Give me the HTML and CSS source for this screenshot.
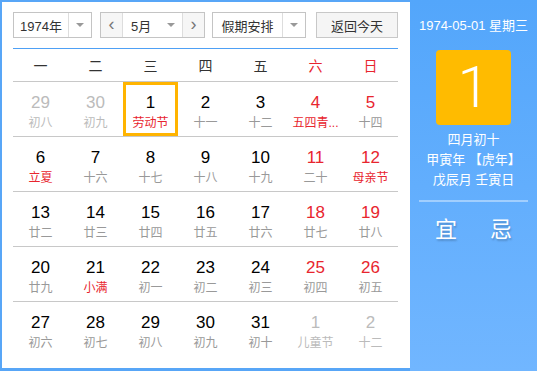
FILE: index.html
```html
<!DOCTYPE html>
<html lang="zh-CN">
<head>
    <meta charset="UTF-8">
    <title>万年历</title>
    <link rel="stylesheet" href="styles.css">
</head>
<body>
    <div class="calendar">
        <div class="main">
            <div class="toolbar">
                <div class="select year">
                    <span class="select-text">1974年</span>
                    <span class="select-arrow"><i></i></span>
                </div>
                <div class="month-group">
                    <span class="nav">&lsaquo;</span>
                    <span class="select-text month">5月</span>
                    <span class="month-arrow"><i></i></span>
                    <span class="nav">&rsaquo;</span>
                </div>
                <div class="select holiday">
                    <span class="select-text">假期安排</span>
                    <span class="select-arrow"><i></i></span>
                </div>
                <button class="today-btn">返回今天</button>
            </div>

            <div class="weekdays">
                <span>一</span><span>二</span><span>三</span><span>四</span><span>五</span>
                <span class="weekend">六</span><span class="weekend">日</span>
            </div>

            <div class="days" id="days"></div>
        </div>

        <div class="side">
            <div class="side-date">1974-05-01 星期三</div>
            <div class="big-day">1</div>
            <div class="lunar-info">
                <p>四月初十</p>
                <p>甲寅年 【虎年】</p>
                <p>戊辰月 壬寅日</p>
            </div>
            <div class="side-line"></div>
            <div class="yiji">
                <span>宜</span>
                <span>忌</span>
            </div>
        </div>
    </div>

    <script>
        // day, lunar text, type: o = other month, w = weekend, f = festival
        const days = [
            ['29', '初八', 'o'], ['30', '初九', 'o'], ['1', '劳动节', 'f sel'], ['2', '十一', ''],
            ['3', '十二', ''], ['4', '五四青...', 'w f'], ['5', '十四', 'w'],
            ['6', '立夏', 'f'], ['7', '十六', ''], ['8', '十七', ''], ['9', '十八', ''],
            ['10', '十九', ''], ['11', '二十', 'w'], ['12', '母亲节', 'w f'],
            ['13', '廿二', ''], ['14', '廿三', ''], ['15', '廿四', ''], ['16', '廿五', ''],
            ['17', '廿六', ''], ['18', '廿七', 'w'], ['19', '廿八', 'w'],
            ['20', '廿九', ''], ['21', '小满', 'f'], ['22', '初一', ''], ['23', '初二', ''],
            ['24', '初三', ''], ['25', '初四', 'w'], ['26', '初五', 'w'],
            ['27', '初六', ''], ['28', '初七', ''], ['29', '初八', ''], ['30', '初九', ''],
            ['31', '初十', ''], ['1', '儿童节', 'o'], ['2', '十二', 'o']
        ];

        const box = document.getElementById('days');
        days.forEach(function(d) {
            const cell = document.createElement('div');
            const flags = d[2].split(' ');
            cell.className = 'day';
            if (flags.includes('o')) cell.classList.add('other');
            if (flags.includes('w')) cell.classList.add('weekend');
            if (flags.includes('f')) cell.classList.add('festival');
            if (flags.includes('sel')) cell.classList.add('selected');
            cell.innerHTML = '<div class="num">' + d[0] + '</div><div class="lunar">' + d[1] + '</div>';
            box.appendChild(cell);
        });
    </script>
</body>
</html>
```

FILE: styles.css
```css
* {
    box-sizing: border-box;
}
body {
    margin: 0;
    font-family: "Liberation Sans", "Noto Sans CJK SC", sans-serif;
    background: #fff;
}
.calendar {
    display: flex;
    width: 537px;
    height: 371px;
    background: #58a6f7;
}
.main {
    width: 408px;
    height: 366px;
    margin: 2px 0 0 2px;
    padding: 10px 12px 0 11px;
    background: #fff;
}
.toolbar {
    display: flex;
    height: 26px;
    font-size: 13px;
    color: #333;
}
.select,
.month-group {
    display: flex;
    border: 1px solid #c4c4c4;
    background: #fff;
}
.year {
    width: 79px;
    margin-right: 8px;
}
.year .select-text {
    width: 55px;
}
.holiday {
    width: 94px;
    margin-right: 10px;
}
.holiday .select-text {
    width: 70px;
}
.select-text {
    display: flex;
    align-items: center;
    justify-content: center;
    border-right: 1px solid #ddd;
}
.select-arrow {
    flex: 1;
    display: flex;
    align-items: center;
    justify-content: center;
}
.select-arrow i,
.month-arrow i {
    width: 0;
    height: 0;
    border-left: 4px solid transparent;
    border-right: 4px solid transparent;
    border-top: 4px solid #999;
}
.month-group {
    width: 105px;
    margin-right: 7px;
}
.nav {
    width: 22px;
    display: flex;
    align-items: center;
    justify-content: center;
    background: #f6f6f6;
    color: #777;
    font-size: 18px;
    line-height: 1;
    padding-bottom: 2px;
}
.nav:first-child {
    border-right: 1px solid #ddd;
}
.nav:last-child {
    border-left: 1px solid #ddd;
}
.month {
    width: 36px;
    border-right: none;
    justify-content: flex-start;
    padding-left: 8px;
}
.month-arrow {
    flex: 1;
    display: flex;
    align-items: center;
    justify-content: center;
}
.today-btn {
    width: 82px;
    height: 26px;
    border: 1px solid #c8c8c8;
    background: #f5f5f5;
    font-family: inherit;
    font-size: 13px;
    color: #333;
    padding: 0;
}
.weekdays {
    display: grid;
    grid-template-columns: repeat(7, 55px);
    margin-top: 10px;
    height: 34px;
    border-top: 1px solid #4ea0f5;
    border-bottom: 1px solid #c8c8c8;
    align-items: center;
    text-align: center;
    font-size: 14px;
    color: #333;
}
.weekdays .weekend {
    color: #e8252e;
}
.days {
    display: grid;
    grid-template-columns: repeat(7, 55px);
}
.day {
    height: 55px;
    padding-top: 11px;
    text-align: center;
    border-bottom: 1px solid #c8c8c8;
}
.day:nth-last-child(-n+7) {
    border-bottom: none;
}
.num {
    font-size: 17px;
    line-height: 20px;
    color: #000;
}
.lunar {
    margin-top: 2px;
    font-size: 12px;
    line-height: 16px;
    color: #999;
}
.weekend .num {
    color: #e8252e;
}
.festival .lunar {
    color: #e8252e;
}
.other .num {
    color: #bbb;
}
.other .lunar {
    color: #bbb;
}
.selected {
    box-shadow: inset 0 0 0 3px #ffb400;
}
.side {
    flex: 1;
    background: linear-gradient(#53a6fb, #71b6ff);
    color: #fff;
    text-align: center;
    padding-top: 16px;
}
.side-date {
    font-size: 13px;
    line-height: 20px;
}
.big-day {
    width: 75px;
    height: 75px;
    margin: 14px auto 0;
    background: #ffbb00;
    border-radius: 4px;
    font-family: Roboto, sans-serif;
    font-weight: 300;
    font-size: 58px;
    line-height: 75px;
}
.lunar-info {
    margin-top: 5px;
    font-size: 13px;
    line-height: 20px;
}
.lunar-info p {
    margin: 0;
}
.side-line {
    height: 2px;
    margin: 10px 9px 0 9px;
    background: rgba(255, 255, 255, 0.4);
}
.yiji {
    display: flex;
    justify-content: center;
    gap: 33px;
    margin-top: 13px;
    font-size: 22px;
    line-height: 30px;
    text-shadow: 1px 2px 2px rgba(0, 0, 0, 0.2);
}
```
